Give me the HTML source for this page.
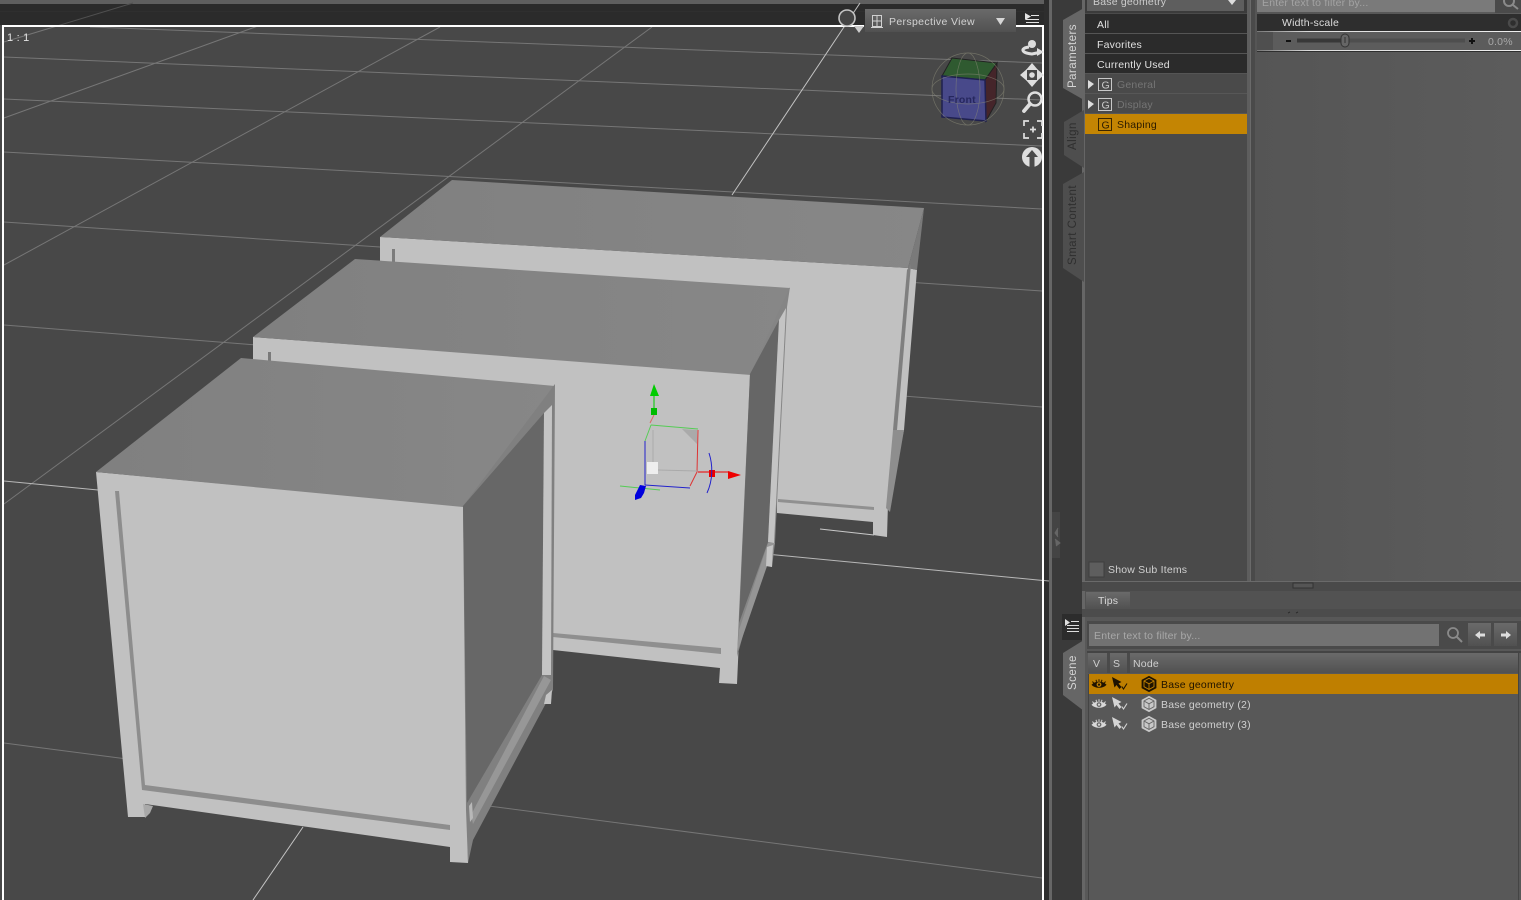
<!DOCTYPE html>
<html><head><meta charset="utf-8"><style>
html,body{margin:0;padding:0;background:#484848;overflow:hidden}
svg{display:block}
text{font-family:"Liberation Sans",sans-serif;font-size:10.5px;letter-spacing:.2px}
.vt{font-size:11.5px;letter-spacing:.45px}
</style></head><body>
<svg width="1521" height="900" viewBox="0 0 1521 900" xmlns="http://www.w3.org/2000/svg">
<defs>
<linearGradient id="top1" x1="0" y1="0" x2="1" y2="0"><stop offset="0" stop-color="#808080"/><stop offset="1" stop-color="#878787"/></linearGradient>
<linearGradient id="bar" x1="0" y1="0" x2="0" y2="1"><stop offset="0" stop-color="#6a6a6a"/><stop offset="1" stop-color="#515151"/></linearGradient>
<linearGradient id="panel" x1="0" y1="0" x2="1" y2="0"><stop offset="0" stop-color="#555"/><stop offset="1" stop-color="#5c5c5c"/></linearGradient>
<linearGradient id="wl" x1="0" y1="0" x2="1" y2="0"><stop offset="0" stop-color="#777"/><stop offset=".2" stop-color="#ddd"/><stop offset="1" stop-color="#eee"/></linearGradient>
<g id="eye"><path d="M-7.5 .8C-4-3.5 4-3.5 7.500 .8C4 4.800 -4 4.800 -7.500 .8Z" fill="currentColor"/><circle cx="0" cy=".6" r="2.400" fill="var(--p)"/><circle cx="0" cy=".6" r="1.100" fill="currentColor"/><path d="M-6.500-2.500l1.300 1.800M-3-4.200l.6 2M0-4.800v2M3-4.200l-.6 2M6.500-2.500l-1.300 1.800" stroke="currentColor" fill="none"/></g>
<g id="arrow"><path d="M-7-7L-4.500 3.500L-2.500 1L.5 5L2.500 3L-.5-.5L2.500-2Z" fill="currentColor"/><path d="M2.800 2.500L4.500 5L8-.5" stroke="currentColor" stroke-width="1.100" fill="none"/></g>
<g id="cube" fill="none" stroke="currentColor" stroke-width="1.200"><path d="M0-7.500L6.800-3.800V3.800L0 7.500L-6.800 3.800V-3.800Z" fill="var(--c)"/><path d="M-5-3L0-.2L5-3M0-.2V5.500M-5-3V2.700L0 5.500L5 2.700V-3L0-5.700Z" stroke="var(--l)" stroke-width=".9"/></g>
</defs>

<!-- viewport floor -->
<rect width="1050" height="900" fill="#484848"/>
<rect width="1050" height="4" fill="#5f5f5f"/>
<rect y="4" width="1050" height="21" fill="#2b2b2b"/>
<rect y="11" width="1050" height="1" fill="#2f2f2f"/>

<!-- grid -->
<g stroke="#767676" stroke-width="1" fill="none">
<path d="M90 27L1042 63"/>
<path d="M4 57L1042 100"/>
<path d="M4 99L1042 146"/>
<path d="M4 152L1042 209"/>
<path d="M4 222L1042 291"/>
<path d="M4 325L1042 407"/>
<path d="M4 743L1042 878"/>
<path d="M57 26L133 3" stroke="#505050"/>
<path d="M4 42L57 26"/>
<path d="M4 118L258 26"/>
<path d="M4 265L440 27"/>
<path d="M4 504L652 27"/>
</g>
<path d="M4 481L1048 581" stroke="#b8b8b8" fill="none"/>
<path d="M860 3L732 195" stroke="#c4c4c4" fill="none"/>
<path d="M303 827L253 900" stroke="#c4c4c4" fill="none"/>
<path d="M820 529L874 535" stroke="#c8c8c8" fill="none"/>

<!-- back box -->
<polygon points="380,237 908,268 917,270 904,430 888,503 887,537 873,535 873,522 777,513 777,400 380,300" fill="#c1c1c1"/>
<polygon points="380,237 452,180 924,208 908,268" fill="url(#top1)"/>
<polygon points="908,268 924,208 917,270" fill="#7a7a7a"/>
<polygon points="907,270 911,264 897,430 893,430" fill="#7f7f7f"/>
<polygon points="893,430 904,430 890,512 886,508" fill="#8e8e8e"/>
<polygon points="778,499 874,507 874,510 778,502" fill="#909090"/>
<polygon points="392,249 395,249 395,262 392,262" fill="#7c7c7c"/>

<!-- middle box -->
<polygon points="253,337 751,374 737,684 719,683 720,668 553,650 440,560 253,400" fill="#c1c1c1"/>
<polygon points="253,337 355,259 790,288 751,375" fill="url(#top1)"/>
<polygon points="750,374 790,287 787,307 775,543 772,567 766,566 768,545 737,657" fill="#858585"/>
<polygon points="750,374 779,320 768,542 739,623" fill="#666"/>
<polygon points="779,320 786,308 774,543 768,542" fill="#c4c4c4"/>
<polygon points="739,630 768,543 775,543 737,653" fill="#959595"/>
<polygon points="767,547 773,545 772,567 766,566" fill="#c4c4c4"/>
<polygon points="553,633 721,648 721,654 553,637" fill="#8f8f8f"/>
<polygon points="268,352 271,352 271,362 268,362" fill="#7a7a7a"/>

<!-- front box -->
<polygon points="96,472 463,506 468,863 450,862 450,847 145,804 145,817 128,817" fill="#c1c1c1"/>
<polygon points="96,472 241,358 555,386 463,507" fill="url(#top1)"/>
<polygon points="463,506 555,384 553,690 473,840 468,863 466,810" fill="#808080"/>
<polygon points="463,506 544,413 542,675 467,803" fill="#676767"/>
<polygon points="544,413 552,405 551,675 542,675" fill="#c4c4c4"/>
<polygon points="471,815 544,676 551,680 473,824" fill="#979797"/>
<polygon points="469,806 472,802 473,818 470,822" fill="#b8b8b8"/>
<polygon points="544,704 551,704 552,690 546,695" fill="#c4c4c4"/>
<polygon points="115,491 119,491 145,785 450,825 450,830 142,790" fill="#8d8d8d"/>
<polygon points="143,804 153,806 150,813 145,818" fill="#a9a9a9"/>

<!-- gizmo -->
<g fill="none" stroke-width="1">
<path d="M654 394V411" stroke="#0c0"/>
<polygon points="654,384 659,396 650,396" fill="#0c0"/>
<rect x="651" y="408" width="6" height="7" fill="#0b0"/>
<path d="M654 415L650 423" stroke="#d66"/>
<path d="M651 425L698 429" stroke="#5c5"/>
<path d="M651 425L645 441" stroke="#5c5"/>
<path d="M645 441V485" stroke="#22c"/>
<path d="M698 430L697 472L690 486" stroke="#d33"/>
<path d="M645 485L690 488" stroke="#22c"/>
<path d="M620 486L660 490" stroke="#5c5"/>
<path d="M653 430V462M658 470L697 471" stroke="#aaa"/>
<polygon points="682,429 697,430 697,444" fill="#aaa"/>
<rect x="647" y="462" width="11" height="12" fill="#eee"/>
<path d="M698 472H730" stroke="#e00"/>
<rect x="709" y="470" width="6" height="7" fill="#e00"/>
<polygon points="728,471 741,475 728,479" fill="#e00"/>
<path d="M709 453C713 465 713 480 707 493" stroke="#22c"/>
<polygon points="640,485 646,486 644,493 641,498 635,500 635,495" fill="#00d"/>
</g>

<!-- viewport white border -->
<path d="M3 900V26H864M1016 26H1043V900" fill="none" stroke="#fff" stroke-width="2"/>
<text x="7" y="41" fill="#e4e4e4" style="font-size:11px">1 : 1</text>

<!-- perspective bar -->
<circle cx="847" cy="18" r="8" fill="#444" stroke="#c4c4c4" stroke-width="1.600"/>
<polygon points="854,26 864,26 859,33" fill="#ccc"/>
<rect x="865" y="9" width="151" height="23" fill="url(#bar)"/>
<g fill="none" stroke="#d0d0d0"><rect x="872.500" y="15.500" width="9" height="11"/><path d="M877 15V27M872 21H882M871 27.500H883"/></g>
<text x="889" y="25" fill="#d2d2d2" style="letter-spacing:.35px">Perspective View</text>
<polygon points="996,18 1005,18 1000.500,25" fill="#d6d6d6"/>
<g fill="#e4e4e4"><polygon points="1025,13 1025,20 1031,16.500"/><rect x="1031" y="15" width="8" height="1"/><rect x="1026" y="19" width="13" height="1"/><rect x="1026" y="22" width="13" height="1"/></g>

<!-- nav cube -->
<g>
<polygon points="942,76 952,58 997,63 985,80" fill="#2f5a30" stroke="#222"/>
<polygon points="985,80 997,63 996,103 986,121" fill="#45252a" stroke="#222"/>
<polygon points="942,76 985,80 986,121 942,117" fill="#48498a" stroke="#1f2050" stroke-width="1.500"/>
<g fill="none" stroke="#8a8a78" stroke-width=".7" opacity=".6"><circle cx="968" cy="89" r="36"/><ellipse cx="968" cy="89" rx="36" ry="15"/><ellipse cx="968" cy="89" rx="12" ry="36"/></g>
<text x="948" y="103" fill="#26275e" font-weight="bold">Front</text>
</g>

<!-- viewport tools -->
<g fill="#dedede">
<circle cx="1032" cy="44" r="4"/>
<path d="M1029 47C1020 48 1021 53 1032 54L1039 52.500" fill="none" stroke="#dedede" stroke-width="3"/>
<polygon points="1037,48 1044,52 1037,56"/>
<polygon points="1032,63 1038,70 1026,70"/><polygon points="1032,87 1038,80 1026,80"/><polygon points="1020,75 1027,69 1027,81"/><polygon points="1044,75 1037,69 1037,81"/><circle cx="1032" cy="75" r="2.800"/>
<circle cx="1035" cy="99" r="6.500" fill="none" stroke="#dedede" stroke-width="2.500"/>
<path d="M1030 104L1024 111" stroke="#dedede" stroke-width="3.800" stroke-linecap="round"/>
<path d="M1024 126V121H1029M1037 121H1042V126M1042 133V138H1037M1029 138H1024V133M1030 129.500H1036M1033 126.500V132.500" fill="none" stroke="#dedede" stroke-width="1.700"/>
<circle cx="1032" cy="157" r="10"/>
<path d="M1032 150L1038 157H1034.500V167H1029.500V157H1026Z" fill="#4a4a4a"/>
</g>

<!-- right chrome -->
<rect x="1044" y="0" width="5" height="900" fill="#2e2e2e"/>
<rect x="1049" y="0" width="3" height="900" fill="#666"/>
<path d="M1044 580.500L1049 581" stroke="#aaa"/>
<rect x="1052" y="0" width="30" height="900" fill="#3a3a3a"/>
<rect x="1052" y="512" width="8" height="46" fill="#444"/>
<path d="M1058 528L1055 533L1058 537M1055 539L1060 543L1056 546" fill="#666" stroke="#666"/>
<rect x="1082" y="0" width="439" height="900" fill="#565656"/>
<rect x="1082" y="0" width="3" height="900" fill="#666"/>

<!-- vertical tabs -->
<path d="M1084 8L1063 20V88L1084 100Z" fill="#666"/>
<path d="M1084 110L1064 122V155L1084 168Z" fill="#4e4e4e"/>
<path d="M1084 172L1063 184V268L1084 282Z" fill="#4e4e4e"/>
<text class="vt" transform="translate(1076,88) rotate(-90)" fill="#d4d4d4">Parameters</text>
<text class="vt" transform="translate(1076,150) rotate(-90)" fill="#2f2f2f">Align</text>
<text class="vt" transform="translate(1076,265) rotate(-90)" fill="#2f2f2f">Smart Content</text>

<!-- top list col -->
<rect x="1085" y="0" width="162" height="581" fill="#4a4a4a"/>
<rect x="1085" y="0" width="162" height="13" fill="#3b3b3b"/>
<rect x="1087" y="0" width="157" height="11" fill="#5e5e5e"/>
<text x="1093" y="5" fill="#ccc">Base geometry</text>
<polygon points="1228,0 1236,0 1232,5" fill="#ddd"/>
<rect x="1085" y="14" width="162" height="59" fill="#2b2b2b"/>
<rect x="1085" y="33" width="162" height="1" fill="#555"/>
<rect x="1085" y="53" width="162" height="1" fill="#555"/>
<rect x="1085" y="73" width="162" height="1" fill="#555"/>
<rect x="1085" y="93" width="162" height="1" fill="#575757"/>
<rect x="1085" y="113" width="162" height="1" fill="#575757"/>
<rect x="1085" y="114" width="162" height="20" fill="#c48503"/>
<text x="1097" y="28" fill="#e2e2e2">All</text>
<text x="1097" y="48" fill="#e2e2e2">Favorites</text>
<text x="1097" y="68" fill="#e2e2e2">Currently Used</text>
<polygon points="1088,80 1094,84 1088,89" fill="#ddd"/>
<polygon points="1088,100 1094,104 1088,109" fill="#ddd"/>
<g fill="none" stroke="#c8c8c8"><rect x="1098.500" y="78.500" width="13" height="12"/><rect x="1098.500" y="98.500" width="13" height="12"/></g>
<rect x="1098.500" y="118.500" width="13" height="12" fill="none" stroke="#3a2500"/>
<text x="1101.500" y="88.500" fill="#ccc">G</text>
<text x="1101.500" y="108.500" fill="#ccc">G</text>
<text x="1101.500" y="128.500" fill="#2a1a00">G</text>
<text x="1117" y="88" fill="#757575">General</text>
<text x="1117" y="108" fill="#757575">Display</text>
<text x="1117" y="128" fill="#2a1a00">Shaping</text>
<rect x="1089" y="562" width="15" height="15" fill="#5e5e5e" stroke="#3f3f3f"/>
<text x="1108" y="573" fill="#d0d0d0">Show Sub Items</text>

<!-- gutter and right panel -->
<rect x="1247" y="0" width="3" height="581" fill="#5e5e5e"/>
<rect x="1250" y="0" width="5" height="581" fill="#4a4a4a"/>
<rect x="1250" y="0" width="1" height="581" fill="#6a6a6a"/>
<rect x="1255" y="0" width="266" height="581" fill="url(#panel)"/>
<rect x="1257" y="0" width="238" height="12" fill="#7a7a7a"/>
<text x="1262" y="6" fill="#a3a3a3">Enter text to filter by...</text>
<rect x="1495" y="0" width="26" height="13" fill="#4a4a4a"/>
<circle cx="1509" cy="1" r="5" fill="none" stroke="#8a8a8a" stroke-width="2"/><path d="M1513 5L1518 9" stroke="#8a8a8a" stroke-width="2"/>
<rect x="1257" y="14" width="264" height="17" fill="#2e2e2e"/>
<text x="1282" y="26" fill="#ddd">Width-scale</text>
<circle cx="1513" cy="23" r="4" fill="none" stroke="#4a4a4a" stroke-width="2.500"/>
<rect x="1257" y="31" width="264" height="20" fill="#5c5c5c"/>
<rect x="1257" y="32" width="16" height="18" fill="#4f4f4f"/>
<rect x="1257" y="31" width="264" height="1" fill="url(#wl)"/>
<rect x="1257" y="50" width="264" height="1" fill="url(#wl)"/>
<rect x="1257" y="51" width="264" height="1" fill="#2e2e2e"/>
<rect x="1286" y="40" width="5" height="2" fill="#111"/>
<rect x="1297" y="38.500" width="48" height="4" fill="#383838"/>
<rect x="1345" y="38.500" width="120" height="4" fill="#4e4e4e"/>
<rect x="1341" y="34" width="8" height="13" rx="4" fill="#666" stroke="#333"/>
<path d="M1345 37V43" stroke="#333"/>
<rect x="1469" y="40" width="6" height="2" fill="#111"/><rect x="1471" y="38" width="2" height="6" fill="#111"/>
<text x="1488" y="45" fill="#a8a8a8">0.0%</text>

<!-- splitter & tips -->
<rect x="1082" y="581" width="439" height="10" fill="#4a4a4a"/>
<rect x="1082" y="581" width="439" height="1" fill="#6a6a6a"/>
<rect x="1293" y="583" width="20" height="5" fill="#555" stroke="#333"/>
<rect x="1085" y="591" width="436" height="18" fill="#525252"/>
<rect x="1086" y="592" width="44" height="17" fill="url(#bar)"/>
<text x="1098" y="604" fill="#d8d8d8">Tips</text>
<rect x="1082" y="609" width="439" height="8" fill="#4c4c4c"/>
<path d="M1288 613l2-1M1296 613l2-1" stroke="#2c2c2c"/>
<rect x="1085" y="617" width="436" height="283" fill="#585858"/>

<!-- scene tabs -->
<rect x="1062" y="614" width="20" height="26" fill="#2c2c2c"/>
<g fill="#ddd"><polygon points="1065,619 1065,626 1070,622.500"/><rect x="1071" y="621" width="8" height="1"/><rect x="1067" y="625" width="12" height="1"/><rect x="1067" y="628" width="12" height="1"/><rect x="1067" y="631" width="12" height="1"/></g>
<path d="M1084 640L1063 653V695L1084 711Z" fill="#666"/>
<text class="vt" transform="translate(1076,690) rotate(-90)" fill="#d4d4d4">Scene</text>

<!-- filter bar -->
<rect x="1087" y="621" width="434" height="28" fill="#4a4a4a"/>
<rect x="1089" y="624" width="350" height="22" fill="#727272"/>
<text x="1094" y="639" fill="#a8a8a8">Enter text to filter by...</text>
<circle cx="1453" cy="633" r="5" fill="none" stroke="#8a8a8a" stroke-width="1.800"/><path d="M1457 637L1462 642" stroke="#8a8a8a" stroke-width="2"/>
<rect x="1468" y="623" width="23" height="23" fill="url(#bar)"/>
<rect x="1494" y="623" width="23" height="23" fill="url(#bar)"/>
<polygon points="1475,635 1480,631 1480,633.500 1485,633.500 1485,636.500 1480,636.500 1480,639" fill="#ddd"/>
<polygon points="1511,635 1506,631 1506,633.500 1501,633.500 1501,636.500 1506,636.500 1506,639" fill="#ddd"/>

<!-- table -->
<rect x="1087" y="651" width="434" height="2" fill="#444"/>
<rect x="1088" y="653" width="430" height="20" fill="url(#bar)"/>
<rect x="1107" y="653" width="3" height="20" fill="#4a4a4a"/>
<rect x="1127" y="653" width="3" height="20" fill="#4a4a4a"/>
<text x="1093" y="667" fill="#cfcfcf">V</text>
<text x="1113" y="667" fill="#cfcfcf">S</text>
<text x="1133" y="667" fill="#cfcfcf">Node</text>
<rect x="1089" y="674" width="429" height="20" fill="#bf7f00"/>
<rect x="1088" y="674" width="1" height="226" fill="#444"/>
<rect x="1518" y="653" width="1" height="247" fill="#444"/>

<use href="#eye" x="1099" y="684" style="color:#1f1300;--p:#bf7f00"/>
<use href="#arrow" x="1119" y="684" style="color:#1f1300"/>
<use href="#cube" x="1149" y="684" style="color:#1f1300;--c:#1f1300;--l:#c08000"/>
<use href="#eye" x="1099" y="704" style="color:#d8d8d8;--p:#666"/>
<use href="#arrow" x="1119" y="704" style="color:#d4d4d4"/>
<use href="#cube" x="1149" y="704" style="color:#c8c8c8;--c:#c8c8c8;--l:#666"/>
<use href="#eye" x="1099" y="724" style="color:#d8d8d8;--p:#666"/>
<use href="#arrow" x="1119" y="724" style="color:#d4d4d4"/>
<use href="#cube" x="1149" y="724" style="color:#c8c8c8;--c:#c8c8c8;--l:#666"/>
<text x="1161" y="688" fill="#1f1300">Base geometry</text>
<text x="1161" y="708" fill="#cfcfcf">Base geometry (2)</text>
<text x="1161" y="728" fill="#cfcfcf">Base geometry (3)</text>
</svg>
</body></html>
